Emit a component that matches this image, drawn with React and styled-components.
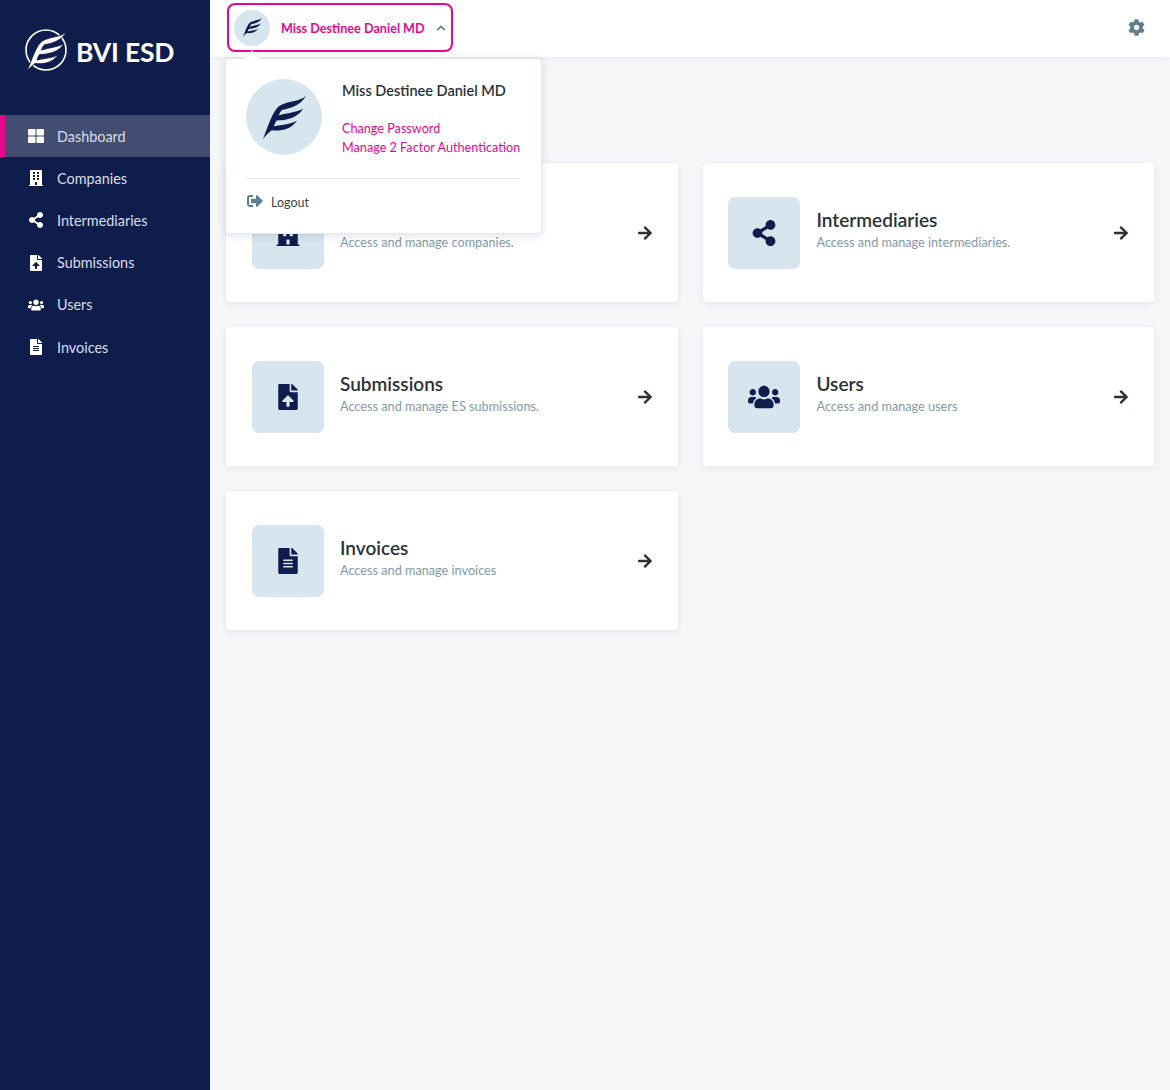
import React from "react";
import styled, { createGlobalStyle } from "styled-components";
import {
  FaThLarge,
  FaBuilding,
  FaShareAlt,
  FaFileUpload,
  FaUsers,
  FaFileAlt,
  FaArrowRight,
  FaCog,
  FaChevronUp,
  FaSignOutAlt,
} from "react-icons/fa";

const navy = "#0f1d4c";
const pink = "#e5088c";

const GlobalStyle = createGlobalStyle`
  html, body {
    margin: 0;
    padding: 0;
    height: 100%;
    overflow: hidden;
    background: #f4f6f8;
    font-family: Lato, "Open Sans", sans-serif;
  }
  * { box-sizing: border-box; }
`;

const Layout = styled.div`
  display: flex;
  width: 1170px;
  height: 1090px;
`;

const Sidebar = styled.aside`
  width: 210px;
  flex-shrink: 0;
  background: ${navy};
  color: #fff;
`;

const Brand = styled.div`
  height: 115px;
  display: flex;
  align-items: flex-start;
  gap: 7px;
  padding: 29px 0 0 25px;
`;

const BrandName = styled.span`
  font-size: 26.5px;
  line-height: 46px;
  font-weight: 700;
  letter-spacing: -0.2px;
  white-space: nowrap;
`;

const Nav = styled.nav`
  display: flex;
  flex-direction: column;
`;

const NavItem = styled.a`
  height: 42.2px;
  display: flex;
  align-items: center;
  gap: 13px;
  padding-left: ${(p) => (p.$active ? "23px" : "28px")};
  border-left: ${(p) => (p.$active ? `5px solid ${pink}` : "0")};
  background: ${(p) => (p.$active ? "#434d72" : "transparent")};
  color: #d9deea;
  font-size: 14.4px;
`;

const NavIcon = styled.span`
  width: 16px;
  display: flex;
  justify-content: center;
  color: #fff;
`;

const Content = styled.div`
  flex: 1;
  min-width: 0;
  position: relative;
`;

const Topbar = styled.header`
  height: 57px;
  background: #fff;
  display: flex;
  align-items: center;
  justify-content: space-between;
  padding: 0 25px 0 17px;
  box-shadow: 0 1px 4px rgba(40, 60, 90, 0.08);
`;

const UserButton = styled.div`
  width: 226px;
  height: 49px;
  margin-top: -2px;
  display: flex;
  align-items: center;
  padding-left: 5px;
  border: 2px solid ${pink};
  border-radius: 8px;
  color: ${pink};
  font-size: 12.65px;
  font-weight: 700;
`;

const Avatar = styled.span`
  width: ${(p) => p.$size}px;
  height: ${(p) => p.$size}px;
  flex-shrink: 0;
  border-radius: 50%;
  background: #d7e6ee;
  display: flex;
  align-items: center;
  justify-content: center;
`;

const UserLabel = styled.span`
  margin-left: 11px;
  padding-top: 1px;
  white-space: nowrap;
`;

const Chevron = styled(FaChevronUp)`
  margin-left: 11px;
  color: #5f7d91;
`;

const Gear = styled(FaCog)`
  color: #5f7d91;
  margin-top: -2px;
`;

const Menu = styled.div`
  position: absolute;
  top: 58px;
  left: 15px;
  width: 317px;
  height: 176px;
  padding: 20px 21px 0 20px;
  background: #fff;
  border-radius: 4px;
  border: 1px solid #e4e8ec;
  box-shadow: 0 2px 8px rgba(40, 60, 90, 0.14);
  z-index: 2;

  &::before {
    content: "";
    position: absolute;
    top: -6px;
    left: 20px;
    width: 11px;
    height: 11px;
    background: #fff;
    transform: rotate(45deg);
    border-left: 1px solid #e4e8ec;
    border-top: 1px solid #e4e8ec;
  }
`;

const MenuHead = styled.div`
  display: flex;
  gap: 20px;
  height: 100px;
  border-bottom: 1px solid #e1e5e9;
`;

const MenuInfo = styled.div`
  display: flex;
  flex-direction: column;
  padding-top: 2px;
`;

const MenuName = styled.div`
  font-size: 14.5px;
  line-height: 20px;
  font-weight: 600;
  color: #2b3138;
  margin-bottom: 18px;
  white-space: nowrap;
`;

const MenuLink = styled.a`
  font-size: 12.65px;
  line-height: 19px;
  color: ${pink};
  white-space: nowrap;
`;

const Logout = styled.div`
  display: flex;
  align-items: center;
  gap: 8px;
  padding: 16px 0 0 1px;
  font-size: 12.5px;
  color: #3c444c;

  svg {
    color: #5f7d91;
    margin-top: -3px;
  }
`;

const Main = styled.main`
  padding: 106px 16px 0;
  display: grid;
  grid-template-columns: 1fr 1fr;
  grid-auto-rows: 139px;
  gap: 25px;
`;

const Card = styled.a`
  display: flex;
  align-items: center;
  padding: 0 25px 0 25.5px;
  background: #fff;
  border-radius: 4px;
  box-shadow: 0 2px 8px rgba(40, 60, 90, 0.07);
`;

const IconBox = styled.span`
  width: 72px;
  height: 72px;
  flex-shrink: 0;
  border-radius: 7px;
  background: #d7e6ee;
  color: ${navy};
  display: flex;
  align-items: center;
  justify-content: center;
`;

const CardText = styled.div`
  flex: 1;
  margin-left: 16.5px;
  padding-bottom: 7px;
`;

const CardTitle = styled.div`
  font-size: 19px;
  line-height: 26px;
  font-weight: 600;
  color: #2b3138;
`;

const CardSub = styled.div`
  font-size: 12.7px;
  line-height: 18px;
  color: #8499a8;
`;

const Arrow = styled(FaArrowRight)`
  color: #2b3138;
`;

// wing from the logo, three blades coming off one stem
const wingPath =
  "M44 0C37 6 25 5 17 10C10 15 6 29 0 44C3 40 6 37 9 35C17 36 28 35 35 25C29 29 20 29 11 31C12 29 13 26 14 25C24 25 36 22 41 13C34 17 25 17 16 20C17 18 18 15 20 14C28 13 39 9 44 0Z";

const Wing = ({ size, color }) => (
  <svg width={size} height={size} viewBox="0 0 44 44" fill={color}>
    <path d={wingPath} />
  </svg>
);

const LogoMark = () => (
  <svg width="44" height="46" viewBox="0 0 44 46" fill="none">
    <circle cx="21" cy="21" r="20" stroke="#fff" strokeWidth="1.6" />
    <path
      d={wingPath}
      transform="translate(2 3) scale(0.9)"
      fill="#fff"
      stroke={navy}
      strokeWidth="1"
    />
  </svg>
);

const navItems = [
  { label: "Dashboard", icon: FaThLarge, size: 16, active: true },
  { label: "Companies", icon: FaBuilding, size: 16 },
  { label: "Intermediaries", icon: FaShareAlt, size: 16 },
  { label: "Submissions", icon: FaFileUpload, size: 16 },
  { label: "Users", icon: FaUsers, size: 16 },
  { label: "Invoices", icon: FaFileAlt, size: 16 },
];

const cards = [
  { title: "Companies", sub: "Access and manage companies.", icon: FaBuilding, size: 26 },
  { title: "Intermediaries", sub: "Access and manage intermediaries.", icon: FaShareAlt, size: 26 },
  { title: "Submissions", sub: "Access and manage ES submissions.", icon: FaFileUpload, size: 26 },
  { title: "Users", sub: "Access and manage users", icon: FaUsers, size: 32 },
  { title: "Invoices", sub: "Access and manage invoices", icon: FaFileAlt, size: 26 },
];

const App = () => {
  return (
    <Layout>
      <GlobalStyle />
      <Sidebar>
        <Brand>
          <LogoMark />
          <BrandName>BVI ESD</BrandName>
        </Brand>
        <Nav>
          {navItems.map((item) => (
            <NavItem key={item.label} $active={item.active}>
              <NavIcon>
                <item.icon size={item.size} />
              </NavIcon>
              {item.label}
            </NavItem>
          ))}
        </Nav>
      </Sidebar>

      <Content>
        <Topbar>
          <UserButton>
            <Avatar $size={36}>
              <Wing size={19} color={navy} />
            </Avatar>
            <UserLabel>Miss Destinee Daniel MD</UserLabel>
            <Chevron size={10} />
          </UserButton>
          <Gear size={17} />
        </Topbar>

        <Menu>
          <MenuHead>
            <Avatar $size={76}>
              <Wing size={43} color={navy} />
            </Avatar>
            <MenuInfo>
              <MenuName>Miss Destinee Daniel MD</MenuName>
              <MenuLink>Change Password</MenuLink>
              <MenuLink>Manage 2 Factor Authentication</MenuLink>
            </MenuInfo>
          </MenuHead>
          <Logout>
            <FaSignOutAlt size={16} />
            <span>Logout</span>
          </Logout>
        </Menu>

        <Main>
          {cards.map((card) => (
            <Card key={card.title}>
              <IconBox>
                <card.icon size={card.size} />
              </IconBox>
              <CardText>
                <CardTitle>{card.title}</CardTitle>
                <CardSub>{card.sub}</CardSub>
              </CardText>
              <Arrow size={16} />
            </Card>
          ))}
        </Main>
      </Content>
    </Layout>
  );
};

export default App;
